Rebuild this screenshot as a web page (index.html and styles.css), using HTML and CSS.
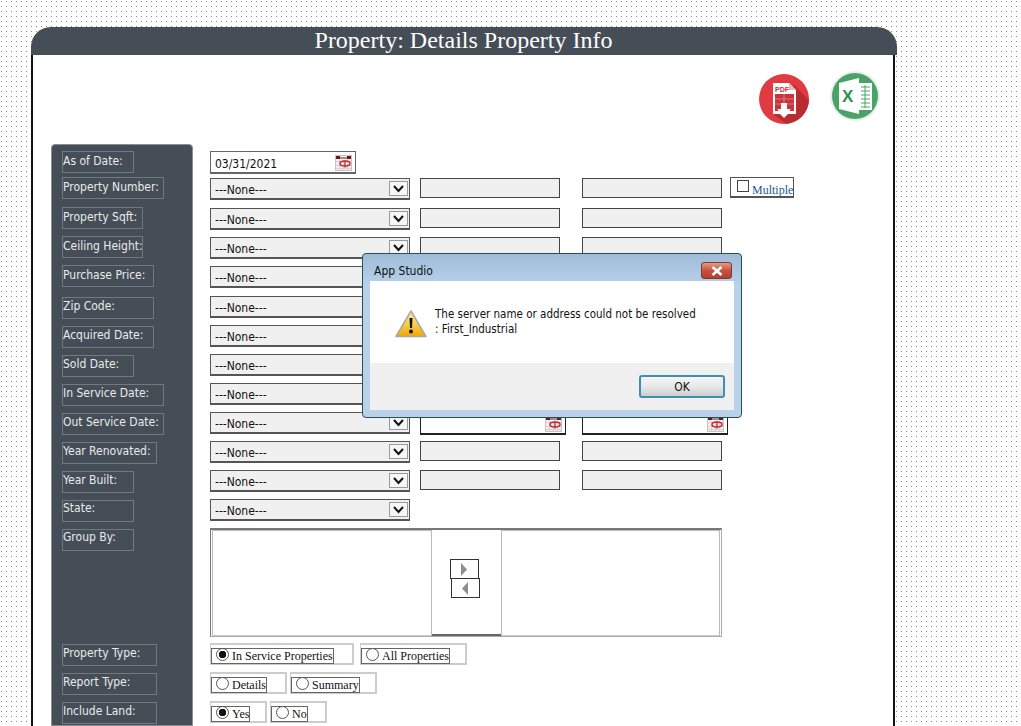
FILE: index.html
```html
<!DOCTYPE html>
<html lang="en">
<head>
	<meta charset="utf-8">
	<title>Property: Details Property Info</title>
	<link rel="stylesheet" href="styles.css">
</head>
<body>

<svg class="defs" width="0" height="0">
	<symbol id="chev" viewBox="0 0 19 15">
		<path d="M5 5 L9.5 10 L14 5" fill="none" stroke="#111" stroke-width="2"/>
	</symbol>
	<symbol id="cal" viewBox="0 0 17 16">
		<rect x="0.5" y="0.5" width="16" height="15" fill="#f2eeee" stroke="#c9c4c4"/>
		<path d="M1 6.500h15M1 10.500h15M1 13.500h15M4.500 5v10M8.500 5v10M12.500 5v10" stroke="#d8d2d2" fill="none"/>
		<rect x="1" y="1" width="4" height="3" fill="#6d1420"/>
		<rect x="12" y="1" width="4" height="3" fill="#6d1420"/>
		<rect x="5" y="2" width="7" height="2" fill="#a98a8e"/>
		<ellipse cx="10" cy="8.500" rx="5" ry="2.500" fill="none" stroke="#c02a35" stroke-width="1.500"/>
		<path d="M10 5.500v7" stroke="#c02a35" stroke-width="1.300"/>
	</symbol>
</svg>

<div class="panel">
	<h1 class="panel-head">Property: Details Property Info</h1>

	<div class="panel-icons">
		<svg class="ico-pdf" width="52" height="52" viewBox="0 0 52 52">
			<defs><clipPath id="pdfclip"><circle cx="26" cy="26" r="25"/></clipPath></defs>
			<circle cx="26" cy="26" r="25" fill="#e13a42"/>
			<path d="M36 12 L52 28 V52 H30 L16 42 Z" fill="#b92c33" clip-path="url(#pdfclip)"/>
			<path d="M15 10 H31 L38 17 V41 H30 L26 45 L22 41 H15 Z" fill="#fff"/>
			<path d="M31 10 V17 H38 Z" fill="#e8b9bb"/>
			<rect x="17" y="21" width="19" height="17" fill="#c9333b"/>
			<path d="M17 26h19M17 31h19M26 21v10" stroke="#fff" stroke-width="0.700" opacity="0.500"/>
			<path d="M23 30 H29 V36 H33 L26 43 L19 36 H23 Z" fill="#fff"/>
			<text x="17" y="18.500" class="pdf-txt">PDF</text>
		</svg>
		<svg class="ico-xls" width="50" height="52" viewBox="0 0 50 52">
			<circle cx="25" cy="26" r="25" fill="#e6f0e8"/>
			<circle cx="25" cy="26" r="23" fill="#4aa268"/>
			<path d="M9 13 L29 8 V44 L9 39 Z" fill="#fff"/>
			<rect x="29" y="13" width="13" height="27" fill="#fff"/>
			<path d="M31 17h9M31 21h9M31 25h9M31 29h9M31 33h9M31 37h9M35 15v23" stroke="#4aa268" stroke-width="1" fill="none"/>
			<text x="12" y="32" class="xls-txt">X</text>
		</svg>
	</div>

	<div class="form">
		<div class="side">
			<div class="lab lab-s first">As of Date:</div>
			<div class="lab lab-l gap-4">Property Number:</div>
			<div class="lab lab-q gap-8">Property Sqft:</div>
			<div class="lab lab-q">Ceiling Height:</div>
			<div class="lab lab-m">Purchase Price:</div>
			<div class="lab lab-m gap-10 up">Zip Code:</div>
			<div class="lab lab-m up">Acquired Date:</div>
			<div class="lab lab-s up">Sold Date:</div>
			<div class="lab lab-l up">In Service Date:</div>
			<div class="lab lab-l up">Out Service Date:</div>
			<div class="lab lab-t up">Year Renovated:</div>
			<div class="lab lab-s up">Year Built:</div>
			<div class="lab lab-s up2">State:</div>
			<div class="lab lab-s up2">Group By:</div>
			<div class="lab lab-t gap-group up">Property Type:</div>
			<div class="lab lab-t up">Report Type:</div>
			<div class="lab lab-t up">Include Land:</div>
		</div>

		<div class="main">
			<div class="date-box first">03/31/2021<svg class="cal" width="17" height="16"><use href="#cal"/></svg></div>

			<div class="row gap-4">
				<div class="sel">---None---<span class="arrow"><svg width="19" height="15"><use href="#chev"/></svg></span></div>
				<div class="fld"></div>
				<div class="fld fld-b"></div>
				<div class="multi"><span class="check"></span>Multiple</div>
			</div>
			<div class="row gap-8">
				<div class="sel">---None---<span class="arrow"><svg width="19" height="15"><use href="#chev"/></svg></span></div>
				<div class="fld"></div>
				<div class="fld fld-b"></div>
			</div>
			<div class="row">
				<div class="sel">---None---<span class="arrow"><svg width="19" height="15"><use href="#chev"/></svg></span></div>
				<div class="fld"></div>
				<div class="fld fld-b"></div>
			</div>
			<div class="row">
				<div class="sel">---None---<span class="arrow"><svg width="19" height="15"><use href="#chev"/></svg></span></div>
				<div class="fld"></div>
				<div class="fld fld-b"></div>
			</div>
			<div class="row gap-8">
				<div class="sel">---None---<span class="arrow"><svg width="19" height="15"><use href="#chev"/></svg></span></div>
				<div class="fld"></div>
				<div class="fld fld-b"></div>
			</div>
			<div class="row">
				<div class="sel">---None---<span class="arrow"><svg width="19" height="15"><use href="#chev"/></svg></span></div>
				<div class="dfld"><svg class="cal" width="17" height="16"><use href="#cal"/></svg></div>
				<div class="dfld dfld-b"><svg class="cal" width="17" height="16"><use href="#cal"/></svg></div>
			</div>
			<div class="row">
				<div class="sel">---None---<span class="arrow"><svg width="19" height="15"><use href="#chev"/></svg></span></div>
				<div class="dfld"><svg class="cal" width="17" height="16"><use href="#cal"/></svg></div>
				<div class="dfld dfld-b"><svg class="cal" width="17" height="16"><use href="#cal"/></svg></div>
			</div>
			<div class="row">
				<div class="sel">---None---<span class="arrow"><svg width="19" height="15"><use href="#chev"/></svg></span></div>
				<div class="dfld"><svg class="cal" width="17" height="16"><use href="#cal"/></svg></div>
				<div class="dfld dfld-b"><svg class="cal" width="17" height="16"><use href="#cal"/></svg></div>
			</div>
			<div class="row">
				<div class="sel">---None---<span class="arrow"><svg width="19" height="15"><use href="#chev"/></svg></span></div>
				<div class="dfld"><svg class="cal" width="17" height="16"><use href="#cal"/></svg></div>
				<div class="dfld dfld-b"><svg class="cal" width="17" height="16"><use href="#cal"/></svg></div>
			</div>
			<div class="row">
				<div class="sel">---None---<span class="arrow"><svg width="19" height="15"><use href="#chev"/></svg></span></div>
				<div class="fld"></div>
				<div class="fld fld-b"></div>
			</div>
			<div class="row">
				<div class="sel">---None---<span class="arrow"><svg width="19" height="15"><use href="#chev"/></svg></span></div>
				<div class="fld"></div>
				<div class="fld fld-b"></div>
			</div>
			<div class="row">
				<div class="sel">---None---<span class="arrow"><svg width="19" height="15"><use href="#chev"/></svg></span></div>
			</div>

			<div class="group-box">
				<div class="list"></div>
				<div class="mover">
					<div class="move-btn"><svg width="8" height="13" viewBox="0 0 8 13"><path d="M1 0 L7 6.500 L1 13 Z" fill="#8e8e8e"/></svg></div>
					<div class="move-btn move-back"><svg width="8" height="13" viewBox="0 0 8 13"><path d="M7 0 L1 6.500 L7 13 Z" fill="#8e8e8e"/></svg></div>
				</div>
				<div class="list"></div>
			</div>

			<div class="radios radios-first">
				<div class="opt opt-service"><div class="opt-in"><span class="radio on"></span>In Service Properties</div></div>
				<div class="opt opt-all"><div class="opt-in"><span class="radio"></span>All Properties</div></div>
			</div>
			<div class="radios">
				<div class="opt opt-details"><div class="opt-in"><span class="radio"></span>Details</div></div>
				<div class="opt opt-summary"><div class="opt-in"><span class="radio"></span>Summary</div></div>
			</div>
			<div class="radios">
				<div class="opt opt-yn"><div class="opt-in"><span class="radio on"></span>Yes</div></div>
				<div class="opt opt-yn"><div class="opt-in"><span class="radio"></span>No</div></div>
			</div>
		</div>
	</div>
</div>

<!-- message box sits over the form -->
<div class="dialog">
	<div class="dlg-title">
		<span>App Studio</span>
		<div class="dlg-close"><svg width="14" height="10" viewBox="0 0 14 10"><path d="M2.500 1 L11.500 9 M11.500 1 L2.500 9" stroke="#fff" stroke-width="2.600"/></svg></div>
	</div>
	<div class="dlg-client">
		<div class="dlg-msg">
			<svg class="warn" width="32" height="28" viewBox="0 0 32 28">
				<defs>
					<linearGradient id="warnfill" x1="0" y1="0" x2="0" y2="1">
						<stop offset="0" stop-color="#fff3a0"/>
						<stop offset="1" stop-color="#f0a800"/>
					</linearGradient>
				</defs>
				<path d="M16 1 L31 26.500 H1 Z" fill="url(#warnfill)" stroke="#a8a8a0" stroke-width="1.500" stroke-linejoin="round"/>
				<path d="M14.500 8 H17.500 L17 18 H15 Z" fill="#111"/>
				<circle cx="16" cy="21.500" r="2" fill="#111"/>
			</svg>
			<p class="dlg-text">The server name or address could not be resolved<br>: First_Industrial</p>
		</div>
		<div class="dlg-foot"><div class="ok-btn">OK</div></div>
	</div>
</div>

</body>
</html>
```

FILE: styles.css
```css
html, body {
	height: 100%;
	overflow: hidden;
}
body {
	margin: 0;
	padding: 27px 0 0 31px;
	box-sizing: border-box;
	background-color: #fff;
	background-image: radial-gradient(circle at 1.5px 1.5px, #888 0.7px, transparent 1px);
	background-size: 5px 5px;
	font-family: "DejaVu Sans", sans-serif;
	font-stretch: condensed;
}
.defs {
	position: absolute;
}

/* panel */
.panel {
	width: 866px;
	height: 699px;
	overflow: hidden;
	display: flex;
	flex-direction: column;
}
.panel-head {
	margin: 0;
	height: 28px;
	flex: none;
	background: #454e56;
	border-radius: 20px 20px 0 0;
	color: #fff;
	font: normal 24px/26px "Liberation Serif", serif;
	text-align: center;
	padding-right: 1px;
}
.panel-icons {
	height: 89px;
	flex: none;
	background: #fff;
	border-left: 2px solid #111;
	border-right: 2px solid #111;
	margin-right: 2px;
	display: flex;
	justify-content: flex-end;
	align-items: flex-start;
	gap: 20px;
	padding-right: 13px;
}
.ico-pdf {
	margin-top: 18px;
}
.ico-xls {
	margin-top: 15px;
}
.pdf-txt {
	font: bold 7px "Liberation Sans", sans-serif;
	fill: #c9333b;
}
.xls-txt {
	font: bold 17px "Liberation Sans Narrow", "Liberation Sans", sans-serif;
	fill: #2f8f50;
}

/* form */
.form {
	flex: 1;
	display: flex;
	background: #fff;
	border-left: 2px solid #111;
	border-right: 2px solid #111;
	margin-right: 2px;
	padding-left: 18px;
}
.side {
	width: 142px;
	box-sizing: border-box;
	background: #454e56;
	border: 1px solid #8a8f94;
	border-radius: 4px 4px 0 0;
	padding: 6px 0 0 10px;
}
.lab {
	height: 22px;
	box-sizing: border-box;
	margin-top: 7px;
	border: 1px solid #6f7a82;
	color: #e8eaec;
	font-size: 12px;
	line-height: 19px;
	white-space: nowrap;
}
.lab.up { line-height: 17px; }
.lab.up2 { line-height: 15px; }
.lab.first, .date-box.first {
	margin-top: 0;
}
.lab-s { width: 72px; }
.lab-q { width: 81px; }
.lab-m { width: 92px; }
.lab-t { width: 95px; }
.lab-l { width: 102px; }
.lab.gap-4 { margin-top: 4px; }
.lab.gap-8 { margin-top: 8px; }
.lab.gap-10 { margin-top: 10px; }
.lab.gap-group { margin-top: 93px; }

.main {
	margin-left: 17px;
	padding-top: 7px;
	color: #111;
	font-size: 12px;
}
.date-box {
	width: 146px;
	height: 23px;
	box-sizing: border-box;
	border: 1px solid #666;
	border-bottom-width: 2px;
	padding: 3px 0 0 4px;
	background: #fff;
	line-height: 18px;
	position: relative;
}
.cal {
	position: absolute;
	right: 3px;
	top: 3px;
}
.row {
	display: flex;
	align-items: flex-start;
	height: 22px;
	margin-top: 7px;
}
.row.gap-4 { margin-top: 4px; }
.row.gap-8 { margin-top: 8px; }
.sel {
	width: 200px;
	height: 22px;
	box-sizing: border-box;
	border: 1px solid #555;
	border-bottom-width: 2px;
	background: #f0f0f0;
	padding-left: 4px;
	line-height: 23px;
	margin-right: 10px;
	position: relative;
}
.arrow {
	position: absolute;
	right: 1px;
	top: 2px;
	width: 19px;
	height: 15px;
	box-sizing: border-box;
	border: 1px solid #999;
	background: #f6f6f6;
	display: flex;
	align-items: center;
	justify-content: center;
}
.arrow svg {
	flex: none;
}
.fld {
	width: 140px;
	height: 20px;
	box-sizing: border-box;
	border: 1px solid #444;
	background: #f0f0f0;
}
.fld-b {
	margin-left: 22px;
}
.dfld {
	width: 146px;
	height: 23px;
	box-sizing: border-box;
	border: 1px solid #222;
	border-bottom-width: 2px;
	background: #fff;
	position: relative;
}
.dfld-b {
	margin-left: 16px;
}
.multi {
	width: 64px;
	height: 21px;
	box-sizing: border-box;
	margin-left: 8px;
	margin-top: -1px;
	border: 1px solid #555;
	border-bottom-width: 2px;
	color: #1a5a96;
	font: 12px/24px "Liberation Serif", serif;
	display: flex;
	padding-left: 6px;
	white-space: nowrap;
}
.check {
	width: 12px;
	height: 12px;
	box-sizing: border-box;
	border: 1px solid #444;
	margin: 2px 3px 0 0;
	flex: none;
}

/* group by */
.group-box {
	width: 512px;
	height: 109px;
	box-sizing: border-box;
	margin-top: 7px;
	border: 1px solid #777;
	border-top-width: 2px;
	border-right-color: #aaa;
	border-bottom-color: #aaa;
	padding: 0 1px 0 1px;
	display: flex;
}
.list {
	flex: 1;
	border: 1px solid #bbb;
	border-bottom-color: #ccc;
}
.mover {
	width: 69px;
	flex: none;
	box-sizing: border-box;
	border-bottom: 2px solid #666;
	padding: 29px 0 0 18px;
}
.move-btn {
	width: 29px;
	height: 20px;
	box-sizing: border-box;
	border: 1px solid #333;
	display: flex;
	align-items: center;
	justify-content: center;
	background: #fff;
}
.move-back {
	margin-left: 1px;
	margin-top: -1px;
}

/* radios */
.radios {
	display: flex;
	gap: 3px;
	height: 22px;
	margin-top: 7px;
	font: 12px "Liberation Serif", serif;
}
.radios-first {
	margin-top: 6px;
	gap: 6px;
}
.opt {
	height: 22px;
	box-sizing: border-box;
	border: 1px solid #ccc;
	border-width: 2px 2px 2px 1px;
	padding-top: 3px;
}
.opt-service { width: 144px; }
.opt-all { width: 107px; }
.opt-details { width: 77px; }
.opt-summary { width: 87px; }
.opt-yn { width: 57px; }
.opt-in {
	display: inline-flex;
	height: 16px;
	box-sizing: border-box;
	border: 1px solid #666;
	line-height: 15px;
	padding-left: 4px;
	white-space: nowrap;
	vertical-align: top;
}
.radio {
	width: 13px;
	height: 13px;
	box-sizing: border-box;
	border: 1px solid #555;
	border-radius: 50%;
	margin: -1px 3px 0 0;
	background: #fff;
	flex: none;
}
.radio.on {
	background: radial-gradient(circle, #111 3.5px, #fff 4px);
}

/* message box */
.dialog {
	position: absolute;
	left: 362px;
	top: 253px;
	width: 380px;
	height: 165px;
	box-sizing: border-box;
	border: 1px solid #26505e;
	border-radius: 4px;
	background: linear-gradient(#9fbcd8, #b9d2ea 20%, #b9d2ea);
	padding: 0 7px 7px;
	display: flex;
	flex-direction: column;
}
.dlg-title {
	height: 27px;
	flex: none;
	display: flex;
	justify-content: space-between;
	color: #111;
	font-size: 12px;
	line-height: 34px;
	padding-left: 4px;
}
.dlg-close {
	width: 31px;
	height: 17px;
	box-sizing: border-box;
	margin: 8px 2px 0 0;
	border: 1px solid #7b3a32;
	border-radius: 3px;
	background: linear-gradient(#e29a8c, #c9523e 50%, #b5402e);
	display: flex;
	align-items: center;
	justify-content: center;
}
.dlg-client {
	flex: 1;
	background: #fff;
	display: flex;
	flex-direction: column;
}
.dlg-msg {
	flex: 1;
	display: flex;
	align-items: flex-start;
	padding: 26px 0 0 25px;
}
.warn {
	margin-top: 3px;
	flex: none;
}
.dlg-text {
	margin: 0 0 0 8px;
	color: #111;
	font-size: 11.500px;
	line-height: 15px;
	white-space: nowrap;
}
.dlg-foot {
	height: 47px;
	flex: none;
	background: #f0f0f0;
	display: flex;
	justify-content: flex-end;
	align-items: flex-start;
	padding: 12px 9px 0 0;
	box-sizing: border-box;
}
.ok-btn {
	width: 86px;
	height: 23px;
	box-sizing: border-box;
	border: 2px solid #3f8fb5;
	border-radius: 3px;
	background: linear-gradient(#f6f6f6, #e8e8e8 50%, #cfcfcf);
	color: #111;
	font-size: 12px;
	line-height: 20px;
	text-align: center;
}
```
